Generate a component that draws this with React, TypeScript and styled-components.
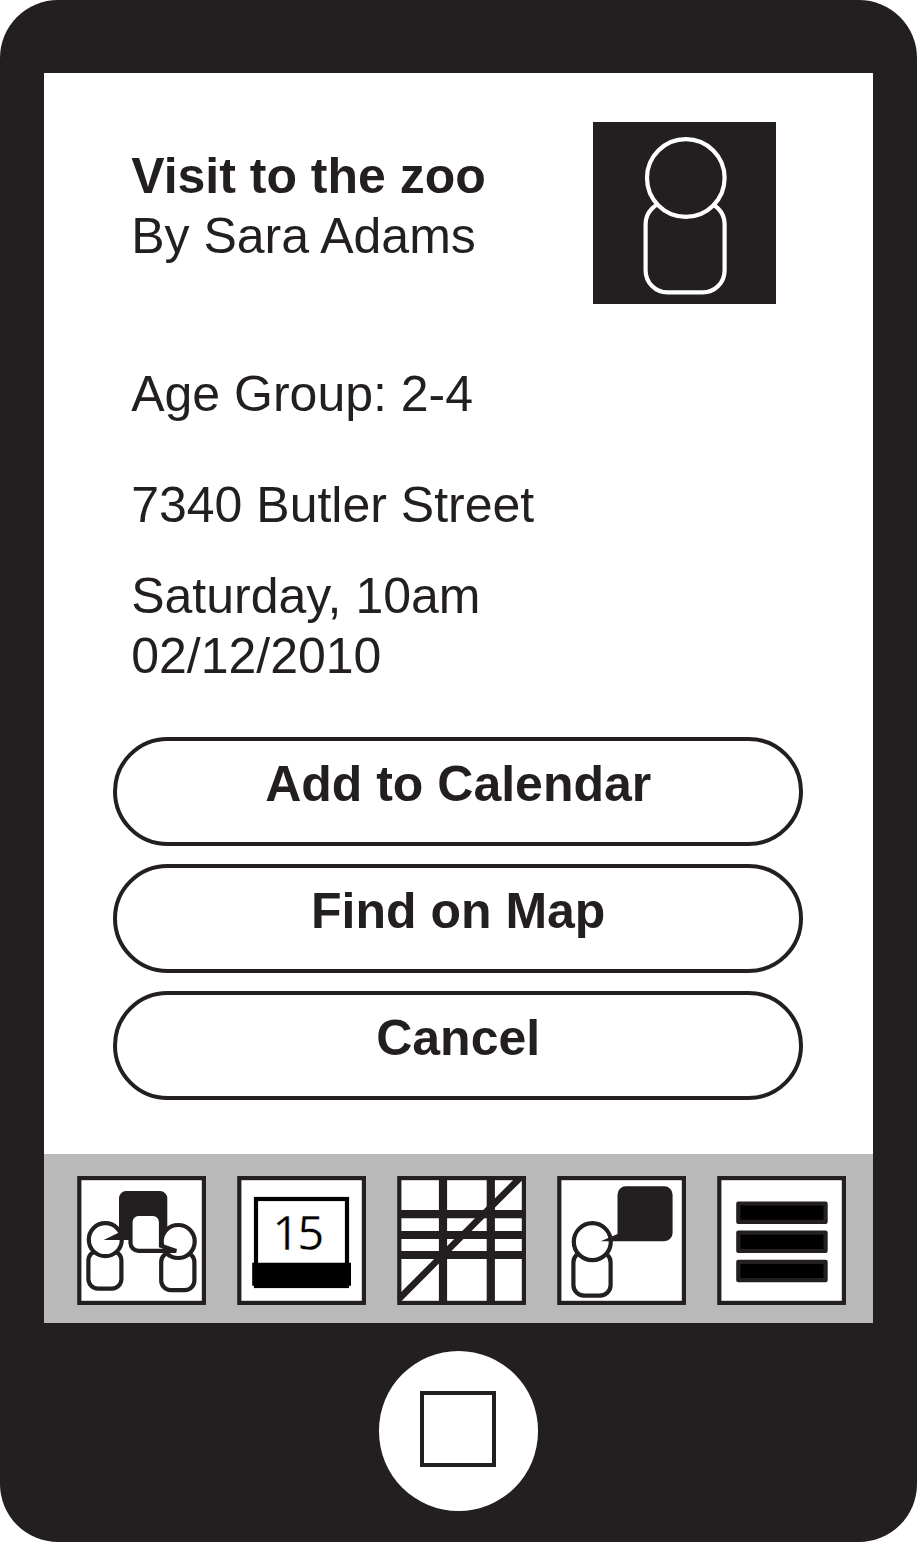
import React from "react";
import styled, { createGlobalStyle } from "styled-components";

const INK = "#231f20";

const GlobalStyle = createGlobalStyle`
  *, *::before, *::after { box-sizing: border-box; }
  body { margin: 0; background: #fff; }
`;

const Phone = styled.div`
  width: 917px;
  height: 1541.5px;
  padding: 73.4px 44px 0 43.6px;
  border-radius: 58px;
  background: ${INK};
  color: ${INK};
  font-family: "Liberation Sans", Arial, Helvetica, sans-serif;
  font-size: 50px;
  line-height: 60px;
`;

const Screen = styled.main`
  display: flex;
  flex-direction: column;
  height: 1249.2px;
  background: #fff;
`;

const Details = styled.section`
  display: flex;
  justify-content: space-between;
  height: 663.6px;
  padding: 48.2px 97.5px 0 87.6px;
`;

const Info = styled.div`
  padding-top: 24.4px;
`;

const Line = styled.p<{ $gap?: number }>`
  margin: ${(p) => p.$gap ?? 0}px 0 0;
  white-space: nowrap;
`;

const Title = styled.h1`
  margin: 0;
  font-size: 50px;
  font-weight: 700;
  white-space: nowrap;
`;

const Avatar = styled.svg`
  display: block;
  flex: none;
  width: 182.5px;
  height: 182.5px;
  background: ${INK};
`;

const Actions = styled.div`
  display: flex;
  flex-direction: column;
  gap: 18px;
  padding: 0 69.6px 0 69.4px;
`;

const ActionButton = styled.button`
  display: flex;
  justify-content: center;
  align-items: flex-start;
  height: 109px;
  padding: 13px 0 0;
  border: 4px solid ${INK};
  border-radius: 54.5px;
  background: #fff;
  color: inherit;
  font: inherit;
  font-weight: 700;
`;

const TabBar = styled.nav`
  display: flex;
  gap: 31px;
  height: 169px;
  margin-top: auto;
  padding: 22.6px 0 0 33.4px;
  background: #b9b9b9;
`;

const TabIcon = styled.svg`
  display: block;
  flex: none;
  width: 129px;
  height: 129px;
`;

const HomeButton = styled.div`
  display: flex;
  align-items: flex-start;
  justify-content: center;
  width: 159.6px;
  height: 159.6px;
  margin: 28.7px auto 0;
  padding-top: 39.7px;
  border-radius: 50%;
  background: #fff;
`;

const HomeSquare = styled.div`
  width: 76px;
  height: 76px;
  border: 4px solid ${INK};
`;

function Tab({ label, children }: { label: string; children: React.ReactNode }) {
  return (
    <TabIcon viewBox="0 0 129 129" role="img" aria-label={label} fill="#fff" stroke={INK} strokeWidth="4.2">
      <rect x="2.3" y="2.1" width="124.6" height="124.8" />
      {children}
    </TabIcon>
  );
}

export default function App() {
  return (
    <>
      <GlobalStyle />
      <Phone>
        <Screen>
          <Details>
            <Info>
              <Title>Visit to the zoo</Title>
              <Line>By Sara Adams</Line>
              <Line $gap={98.5}>Age Group: 2-4</Line>
              <Line $gap={51}>7340 Butler Street</Line>
              <Line $gap={31}>Saturday, 10am</Line>
              <Line>02/12/2010</Line>
            </Info>
            <Avatar viewBox="0 0 182.5 182.5" fill={INK} stroke="#fff" strokeWidth="4.2">
              <rect x="52.6" y="80" width="79" height="90.4" rx="22" />
              <circle cx="92.8" cy="56" r="38.8" />
            </Avatar>
          </Details>
          <Actions>
            <ActionButton>Add to Calendar</ActionButton>
            <ActionButton>Find on Map</ActionButton>
            <ActionButton>Cancel</ActionButton>
          </Actions>
          <TabBar>
            <Tab label="Groups">
              <rect x="11.4" y="75" width="33" height="37.6" rx="9.5" />
              <circle cx="28.3" cy="63.7" r="16.5" />
              <path
                d="M48.5 15H83a7.3 7.3 0 0 1 7.3 7.3V64H26.7L42 56.5V22.3A7.3 7.3 0 0 1 48.5 15Z"
                fill={INK}
                stroke="none"
              />
              <rect x="84.2" y="76.5" width="33.2" height="37.6" rx="9.5" />
              <circle cx="101.2" cy="65.5" r="16.5" />
              <path
                d="M61.5 38H76a8 8 0 0 1 8 8V69.8L99.3 74.9H61.5A8 8 0 0 1 53.5 66.9V46A8 8 0 0 1 61.5 38Z"
              />
            </Tab>
            <Tab label="Calendar">
              <rect x="19" y="23" width="91" height="87" stroke="#000" />
              <path d="M15.2 86.7H114V109.7H112V112H17V109.7H15.2Z" fill="#000" stroke="none" />
              <text
                x="35.3"
                y="74"
                fontFamily='"Noto Sans", sans-serif'
                fontSize="47.5"
                letterSpacing="-2.2"
                fill="#000"
                stroke="#fff"
                strokeWidth="0.5"
              >
                15
              </text>
            </Tab>
            <Tab label="Map">
              <path d="M46 2V127M93.8 2V127M2 38.2H127M2 59H127M2 79H127" strokeWidth="8.2" />
              <path d="M2 122.8 124 .8" strokeWidth="6.6" />
            </Tab>
            <Tab label="Messages">
              <rect x="16.4" y="76" width="37.2" height="43.6" rx="10.5" />
              <circle cx="35.3" cy="65.7" r="18.5" />
              <path
                d="M68.8 10.2H107.3a8.3 8.3 0 0 1 8.3 8.3V57a8.3 8.3 0 0 1-8.3 8.3H43.7L60.5 58V18.5A8.3 8.3 0 0 1 68.8 10.2Z"
                fill={INK}
                stroke="none"
              />
            </Tab>
            <Tab label="Menu">
              <g fill="#000" strokeLinejoin="round">
                <rect x="21.3" y="27.5" width="87.3" height="18.4" />
                <rect x="21.3" y="56.6" width="87.3" height="18.4" />
                <rect x="21.3" y="85.8" width="87.3" height="18.4" />
              </g>
            </Tab>
          </TabBar>
        </Screen>
        <HomeButton>
          <HomeSquare />
        </HomeButton>
      </Phone>
    </>
  );
}
